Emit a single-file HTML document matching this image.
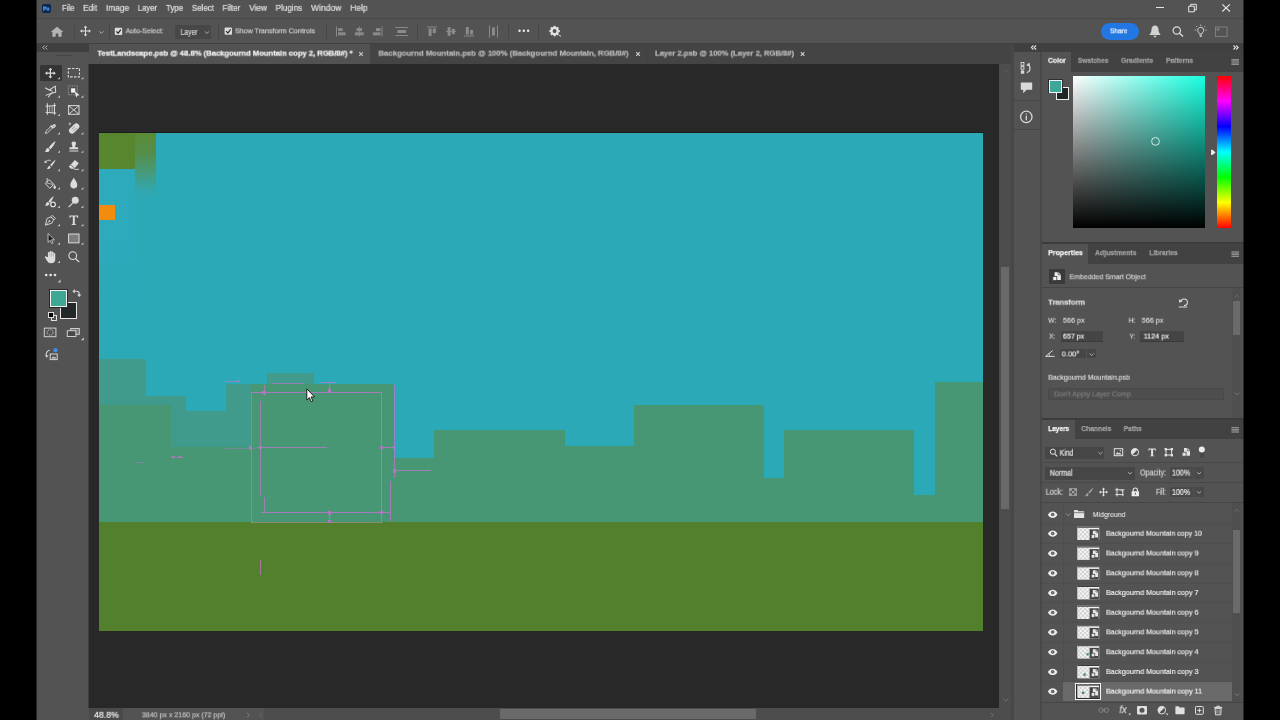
<!DOCTYPE html>
<html>
<head>
<meta charset="utf-8">
<title>Photoshop</title>
<style>
*{box-sizing:border-box;margin:0;padding:0}
html,body{width:1280px;height:720px;overflow:hidden;background:#000}
body{font-family:"Liberation Sans",sans-serif;color:#dcdcdc;position:relative}
.a{position:absolute;display:block}
.t{position:absolute;white-space:nowrap;transform-origin:0 50%;will-change:transform;font-size:8px;line-height:10px;color:#d6d6d6;font-family:"Liberation Sans",sans-serif}
.t{-webkit-text-stroke:0.2px currentColor}
.b{font-weight:bold;-webkit-text-stroke:0.25px currentColor}
svg{overflow:visible}
</style>
</head>
<body>
<div class="a" style="left:36px;top:0;width:1208px;height:720px;background:#535353"></div>
<div class="a" style="left:89.4px;top:44px;width:924.1px;height:20px;background:#444444;"></div>
<div class="a" style="left:89.4px;top:44px;width:280.6px;height:20px;background:#525252;"></div>
<div class="t b" style="left:97px;top:48px;font-size:8px;line-height:10px;transform:translate(0.4px,0.6px) scaleX(0.9545);color:#f4f4f4;">TestLandscape.psb @ 48.8% (Backgournd Mountain copy 2, RGB/8#) *</div>
<svg class="a" style="left:358px;top:51px;" width="8" height="8"><g transform="translate(0.6 0.6)"><path d="M0.600 0.600l3.600 3.600M4.200 0.600l-3.600 3.600" fill="none" stroke="#c8c8c8" stroke-width="1.100"/></g></svg>
<div class="t b" style="left:378px;top:48px;font-size:8px;line-height:10px;transform:translate(0.5px,0.6px) scaleX(0.9655);color:#bababa;">Backgournd Mountain.psb @ 100% (Backgournd Mountain, RGB/8#)</div>
<svg class="a" style="left:635px;top:51px;" width="8" height="8"><g transform="translate(0.6 0.6)"><path d="M0.600 0.600l3.600 3.600M4.200 0.600l-3.600 3.600" fill="none" stroke="#d0d0d0" stroke-width="1.100"/></g></svg>
<div class="a" style="left:646.5px;top:44px;width:1px;height:20px;background:#414141;"></div>
<div class="t b" style="left:655px;top:48px;font-size:8px;line-height:10px;transform:translate(0px,0.6px) scaleX(0.9515);color:#bababa;">Layer 2.psb @ 100% (Layer 2, RGB/8#)</div>
<svg class="a" style="left:800px;top:51px;" width="8" height="8"><g transform="translate(0.2 0.6)"><path d="M0.600 0.600l3.600 3.600M4.200 0.600l-3.600 3.600" fill="none" stroke="#d0d0d0" stroke-width="1.100"/></g></svg>
<div class="a" style="left:88px;top:64px;width:911px;height:644px;background:#282828;"></div>
<div class="a" style="left:99px;top:133px;width:884px;height:498px;background:#2ca9b7;overflow:hidden">
<div class="a" style="left:0px;top:35.6px;width:36px;height:141.4px;background:linear-gradient(to bottom,#2dabbd 0%,#2daabc 40%,rgba(45,170,188,0) 100%);"></div>
<div class="a" style="left:0px;top:0px;width:35.6px;height:35.6px;background:#57862e;"></div>
<div class="a" style="left:35.6px;top:0px;width:21.8px;height:67px;background:linear-gradient(to bottom,#598a35 0%,#558e4a 30%,rgba(76,152,110,0.800) 60%,rgba(60,160,150,0.350) 85%,rgba(44,169,183,0) 100%);"></div>
<div class="a" style="left:0px;top:71.6px;width:16.3px;height:15.2px;background:#f28b0e;"></div>
<div class="a" style="left:0px;top:225.8px;width:47.3px;height:164.2px;background:#419b8d;"></div>
<div class="a" style="left:47.3px;top:263px;width:39.7px;height:127px;background:#419b8d;"></div>
<div class="a" style="left:87px;top:278px;width:40px;height:112px;background:#419b8d;"></div>
<div class="a" style="left:126.7px;top:250.8px;width:41.3px;height:139.2px;background:#419b8d;"></div>
<div class="a" style="left:167.6px;top:239.7px;width:47.6px;height:150.3px;background:#419b8d;"></div>
<div class="a" style="left:0px;top:272px;width:72px;height:118px;background:#479775;"></div>
<div class="a" style="left:72px;top:314.4px;width:80px;height:75.6px;background:#479775;"></div>
<div class="a" style="left:151.5px;top:250.8px;width:143.8px;height:139.2px;background:#479775;"></div>
<div class="a" style="left:295.3px;top:325px;width:39.7px;height:65px;background:#479775;"></div>
<div class="a" style="left:335px;top:296.7px;width:131px;height:93.3px;background:#479775;"></div>
<div class="a" style="left:466px;top:313px;width:69.3px;height:77px;background:#479775;"></div>
<div class="a" style="left:535.3px;top:272.3px;width:130px;height:117.7px;background:#479775;"></div>
<div class="a" style="left:665.3px;top:344.5px;width:20px;height:45.5px;background:#479775;"></div>
<div class="a" style="left:685.3px;top:296.7px;width:130px;height:93.3px;background:#479775;"></div>
<div class="a" style="left:815.3px;top:362px;width:20.7px;height:28px;background:#479775;"></div>
<div class="a" style="left:836px;top:248.7px;width:48px;height:141.3px;background:#479775;"></div>
<div class="a" style="left:0px;top:389.3px;width:884px;height:108.7px;background:#52802d;"></div>
</div>
<div class="a" style="left:99px;top:132.3px;width:884px;height:0.7px;background:#1c1c1c;"></div>
<div class="a" style="left:0;top:0;width:1280px;height:720px;opacity:0.780;filter:blur(0.350px)">
<div class="a" style="left:251px;top:391.7px;width:130.5px;height:1px;background:#c872d2;opacity:1;"></div>
<div class="a" style="left:250.5px;top:392px;width:1px;height:130.6px;background:#c872d2;opacity:0.8;"></div>
<div class="a" style="left:381px;top:392px;width:1px;height:130.6px;background:#c872d2;opacity:1;"></div>
<div class="a" style="left:251px;top:522.1px;width:130.5px;height:1px;background:#d79ad6;opacity:0.55;"></div>
<div class="a" style="left:260.3px;top:400.5px;width:1px;height:95.1px;background:#c872d2;opacity:0.85;"></div>
<div class="a" style="left:263.5px;top:384.5px;width:1px;height:11.5px;background:#c872d2;opacity:0.85;"></div>
<div class="a" style="left:263.5px;top:496.8px;width:1px;height:16px;background:#c872d2;opacity:0.85;"></div>
<div class="a" style="left:261.2px;top:512.3px;width:129.5px;height:1px;background:#c872d2;opacity:1;"></div>
<div class="a" style="left:393.7px;top:384.5px;width:1px;height:93.9px;background:#c872d2;opacity:0.9;"></div>
<div class="a" style="left:389.5px;top:480.7px;width:1px;height:40.1px;background:#c872d2;opacity:0.9;"></div>
<div class="a" style="left:256.7px;top:447px;width:70.5px;height:1px;background:#c872d2;opacity:0.9;"></div>
<div class="a" style="left:225px;top:448.1px;width:31px;height:1px;background:#c872d2;opacity:0.45;"></div>
<div class="a" style="left:248.8px;top:446.2px;width:3.4px;height:3.6px;background:#c872d2;"></div>
<div class="a" style="left:259.4px;top:445.8px;width:3px;height:3.4px;background:#c872d2;"></div>
<div class="a" style="left:381.5px;top:447px;width:12.7px;height:1px;background:#c872d2;opacity:1;"></div>
<div class="a" style="left:380.4px;top:445.6px;width:2.6px;height:3.8px;background:#c872d2;"></div>
<div class="a" style="left:392.6px;top:445.6px;width:2.8px;height:3.8px;background:#c872d2;"></div>
<div class="a" style="left:394.2px;top:470.4px;width:37.1px;height:1px;background:#c872d2;opacity:0.9;"></div>
<div class="a" style="left:393px;top:469px;width:3.2px;height:3.8px;background:#c872d2;"></div>
<div class="a" style="left:329px;top:382.5px;width:1px;height:9.7px;background:#c872d2;opacity:1;"></div>
<div class="a" style="left:320.8px;top:382.1px;width:14.9px;height:1px;background:#c872d2;opacity:1;"></div>
<div class="a" style="left:328px;top:388.8px;width:3px;height:4px;background:#c872d2;"></div>
<div class="a" style="left:272.2px;top:382.5px;width:31.4px;height:1px;background:#c872d2;opacity:0.8;"></div>
<div class="a" style="left:224.6px;top:380.6px;width:15px;height:1px;background:#c872d2;opacity:0.85;"></div>
<div class="a" style="left:236.6px;top:379.8px;width:3.2px;height:2.6px;background:#c872d2;opacity:0.800;"></div>
<div class="a" style="left:262.4px;top:390.6px;width:3.2px;height:3.4px;background:#c872d2;"></div>
<div class="a" style="left:329px;top:512.8px;width:1px;height:9.8px;background:#c872d2;opacity:1;"></div>
<div class="a" style="left:328px;top:511.2px;width:3px;height:3.6px;background:#c872d2;"></div>
<div class="a" style="left:328px;top:519.6px;width:3px;height:3.6px;background:#c872d2;"></div>
<div class="a" style="left:379.8px;top:511.4px;width:3.2px;height:3px;background:#c872d2;"></div>
<div class="a" style="left:170.5px;top:456.5px;width:13.3px;height:1px;background:#c872d2;opacity:0.7;"></div>
<div class="a" style="left:171px;top:455.6px;width:4.4px;height:2.8px;background:#c872d2;opacity:0.700;"></div>
<div class="a" style="left:178px;top:455.6px;width:4.4px;height:2.8px;background:#c872d2;opacity:0.700;"></div>
<div class="a" style="left:136.2px;top:461.5px;width:7.6px;height:1px;background:#c872d2;opacity:0.6;"></div>
<div class="a" style="left:259.7px;top:560px;width:1px;height:15.4px;background:#c872d2;opacity:0.9;"></div>
</div>
<svg class="a" style="left:306px;top:388px;" width="13" height="17"><g transform="translate(0 0)"><path d="M0.800 0.800v11.200l2.600-2.400 1.800 4.100 1.700-0.750-1.800-4h3.500z" fill="#fdfdfd" stroke="#101010" stroke-width="0.900" stroke-linejoin="miter"/></g></svg>
<div class="a" style="left:999px;top:64px;width:12px;height:644px;background:#4d4d4d;"></div>
<div class="a" style="left:1001px;top:266.6px;width:7.8px;height:242.7px;background:#696969;"></div>
<svg class="a" style="left:1002px;top:69px;" width="9" height="7"><g transform="translate(0.8 0.4)"><path d="M0.500 3.200l2.500-2.400 2.500 2.400" fill="none" stroke="#606060" stroke-width="0.900"/></g></svg>
<svg class="a" style="left:1002px;top:698px;" width="9" height="6"><g transform="translate(0.8 0)"><path d="M0.500 0.800l2.500 2.400 2.500-2.400" fill="none" stroke="#7a7a7a" stroke-width="0.900"/></g></svg>
<div class="a" style="left:1011px;top:44px;width:2.8px;height:676px;background:#474747;"></div>
<div class="a" style="left:88.4px;top:708px;width:922.6px;height:12px;background:#4d4d4d;"></div>
<div class="a" style="left:88.4px;top:708px;width:35px;height:12px;background:#494949;"></div>
<div class="a" style="left:123.4px;top:708px;width:140.6px;height:12px;background:#535353;"></div>
<div class="t" style="left:94px;top:709px;font-size:9px;line-height:11px;transform:translate(0px,0.8px) scaleX(0.9718);color:#f0f0f0;">48.8%</div>
<div class="t" style="left:141px;top:710px;font-size:7.8px;line-height:9.8px;transform:translate(0.9px,0.3px) scaleX(0.9019);color:#c4c4c4;">3840 px x 2160 px (72 ppi)</div>
<svg class="a" style="left:246px;top:712px;" width="6" height="8"><g transform="translate(0.5 0.4)"><path d="M0.600 0.600l2.200 2.200-2.200 2.200" fill="none" stroke="#8a8a8a" stroke-width="0.800"/></g></svg>
<svg class="a" style="left:259px;top:712px;" width="6" height="8"><g transform="translate(0 0.4)"><path d="M2.800 0.600l-2.200 2.200 2.200 2.200" fill="none" stroke="#6a6a6a" stroke-width="0.800"/></g></svg>
<div class="a" style="left:499.5px;top:708.8px;width:256px;height:9.8px;background:#6a6a6a;"></div>
<svg class="a" style="left:990px;top:712px;" width="6" height="8"><g transform="translate(0.4 0.4)"><path d="M0.600 0.600l2.200 2.200-2.200 2.200" fill="none" stroke="#767676" stroke-width="0.800"/></g></svg>
<div class="a" style="left:36px;top:43.5px;width:53px;height:676.5px;background:#535353;"></div>
<div class="a" style="left:88px;top:64px;width:1px;height:644px;background:#3d3d3d;"></div>
<div class="a" style="left:36px;top:43px;width:53px;height:9px;background:#404040;"></div>
<svg class="a" style="left:42px;top:45px;" width="8" height="7"><g transform="translate(0 0)"><path d="M2.600 0.500l-2 2 2 2M5.300 0.500l-2 2 2 2" fill="none" stroke="#c8c8c8" stroke-width="0.8"/></g></svg>
<div class="a" style="left:55.5px;top:54.6px;width:15.5px;height:1px;background:#454545;"></div>
<div class="a" style="left:40px;top:65px;width:21.8px;height:15.6px;background:#353535;border-radius:1px;"></div>
<svg class="a" style="left:44px;top:66px;" width="15" height="16"><g transform="translate(0.1 0.9) scale(0.9 0.9)"><path d="M7 2.600v8.800M2.600 7h8.800" fill="none" stroke="#dcdcdc" stroke-width="1.350"/><path d="M7 1l2.100 2.500h-4.200zM7 13l2.100-2.500h-4.200zM1 7l2.500-2.100v4.200zM13 7l-2.500-2.100v4.200z" fill="#dcdcdc"/></g></svg>
<svg class="a" style="left:57px;top:76px;" width="6" height="6"><g transform="translate(0.6 0.9)"><path d="M2.400 0v2.400h-2.400z" fill="#c4c4c4"/></g></svg>
<svg class="a" style="left:67px;top:66px;" width="16" height="16"><g transform="translate(0.5 0.9) scale(0.9 0.9)"><rect x="0.900" y="1.700" width="12.400" height="9.400" fill="none" stroke="#dcdcdc" stroke-width="1.200" stroke-dasharray="2.700 1.500"/></g></svg>
<svg class="a" style="left:81px;top:76px;" width="5" height="6"><g transform="translate(0 0.9)"><path d="M2.400 0v2.400h-2.400z" fill="#c4c4c4"/></g></svg>
<svg class="a" style="left:44px;top:85px;" width="15" height="15"><g transform="translate(0.1 0.27) scale(0.9 0.9)"><path d="M1.100 2.800l4.650 2.500 6.650-4.400 0.500 6.800-5.400 1.500-2.800 4.200" fill="none" stroke="#dcdcdc" stroke-width="1.150" stroke-linejoin="round"/><path d="M9.400 8.400l-7.700 2.800M5.750 5.300l3.900 1.500" fill="none" stroke="#dcdcdc" stroke-width="1"/></g></svg>
<svg class="a" style="left:57px;top:95px;" width="6" height="5"><g transform="translate(0.6 0.27)"><path d="M2.400 0v2.400h-2.400z" fill="#c4c4c4"/></g></svg>
<svg class="a" style="left:67px;top:85px;" width="16" height="15"><g transform="translate(0.5 0.27) scale(0.9 0.9)"><rect x="1" y="0.600" width="10" height="10" fill="none" stroke="#dcdcdc" stroke-width="0.800" stroke-dasharray="1.300 0.700" opacity="0.600"/><rect x="4" y="3.400" width="4.600" height="4.800" fill="#f2f2f2"/><path d="M8 6.600l5.600 4.500-2.500 0.300-1.500 2.300z" fill="#e8e8e8"/></g></svg>
<svg class="a" style="left:81px;top:95px;" width="5" height="5"><g transform="translate(0 0.27)"><path d="M2.400 0v2.400h-2.400z" fill="#c4c4c4"/></g></svg>
<svg class="a" style="left:44px;top:103px;" width="15" height="16"><g transform="translate(0.1 0.64) scale(0.9 0.9)"><path d="M3.600 -0.400v12.800M11.500 -0.400v12.800" fill="none" stroke="#dcdcdc" stroke-width="1.150"/><path d="M1.700 2.900l11.600-0.800M1.700 9.700l11.600 0.800" fill="none" stroke="#dcdcdc" stroke-width="1.100"/><path d="M6.200 2.600v7.500M8.900 2.500v7.700" fill="none" stroke="#dcdcdc" stroke-width="0.800" opacity="0.850"/></g></svg>
<svg class="a" style="left:57px;top:113px;" width="6" height="6"><g transform="translate(0.6 0.64)"><path d="M2.400 0v2.400h-2.400z" fill="#c4c4c4"/></g></svg>
<svg class="a" style="left:67px;top:103px;" width="16" height="16"><g transform="translate(0.5 0.64) scale(0.9 0.9)"><rect x="1.200" y="2.200" width="11.600" height="9.600" fill="none" stroke="#dcdcdc" stroke-width="1.1"/><path d="M1.200 2.200l11.600 9.600M12.800 2.200l-11.600 9.600" fill="none" stroke="#dcdcdc" stroke-width="1"/></g></svg>
<svg class="a" style="left:44px;top:122px;" width="15" height="15"><g transform="translate(0.1 0.01) scale(0.9 0.9)"><path d="M1.400 12.600l0.600-2.200 5.600-5.600 1.700 1.700-5.600 5.600z" fill="none" stroke="#dcdcdc" stroke-width="1"/><path d="M7.200 3.800l3 3M8.600 5.400l2.100-2.100c0.800-0.800 2.200 0.600 1.400 1.400l-2.100 2.100" fill="none" stroke="#dcdcdc" stroke-width="1.500"/></g></svg>
<svg class="a" style="left:57px;top:132px;" width="6" height="5"><g transform="translate(0.6 0.01)"><path d="M2.400 0v2.400h-2.400z" fill="#c4c4c4"/></g></svg>
<svg class="a" style="left:67px;top:122px;" width="16" height="15"><g transform="translate(0.5 0.01) scale(0.9 0.9)"><rect x="-3.300" y="-6.700" width="6.600" height="13.400" rx="3.300" transform="translate(7.400 7.200) rotate(45)" fill="#dcdcdc"/><path d="M4.600 8.400l3.600-3.600M6.400 10.200l3.600-3.600" stroke="#6a6a6a" stroke-width="0.700" fill="none"/><path d="M2.600 0.600v3M1.100 2.100h3" fill="none" stroke="#dcdcdc" stroke-width="0.800"/></g></svg>
<svg class="a" style="left:81px;top:132px;" width="5" height="5"><g transform="translate(0 0.01)"><path d="M2.400 0v2.400h-2.400z" fill="#c4c4c4"/></g></svg>
<svg class="a" style="left:44px;top:140px;" width="15" height="15"><g transform="translate(0.1 0.38) scale(0.9 0.9)"><path d="M12.800 0.800c-2.900 1.700-5.900 4.700-7.600 7.300l2 1.800c2.200-2.100 4.700-5.700 5.600-9.100z" fill="#dcdcdc"/><path d="M4.600 8.600c-1.800 0-2.500 1.300-2.700 2.600-0.100 0.700-0.600 1.100-1.300 1.400 2 0.900 5 0.400 5.700-2z" fill="#dcdcdc"/></g></svg>
<svg class="a" style="left:57px;top:150px;" width="6" height="5"><g transform="translate(0.6 0.38)"><path d="M2.400 0v2.400h-2.400z" fill="#c4c4c4"/></g></svg>
<svg class="a" style="left:67px;top:140px;" width="16" height="15"><g transform="translate(0.5 0.38) scale(0.9 0.9)"><path d="M7 1.200c-1.600 0-2.500 1-2.500 2.200 0 1.100 0.900 1.700 0.900 2.900v1.200h-3.200v2.400h9.600v-2.400h-3.200v-1.200c0-1.200 0.900-1.800 0.900-2.900 0-1.200-0.900-2.200-2.500-2.200z" fill="#dcdcdc"/><path d="M2 11.800h10" fill="none" stroke="#dcdcdc" stroke-width="1.100"/></g></svg>
<svg class="a" style="left:81px;top:150px;" width="5" height="5"><g transform="translate(0 0.38)"><path d="M2.400 0v2.400h-2.400z" fill="#c4c4c4"/></g></svg>
<svg class="a" style="left:44px;top:158px;" width="15" height="16"><g transform="translate(0.1 0.75) scale(0.9 0.9)"><path d="M12.800 1.200c-2.200 1.400-4.700 4-6.100 6.100l1.400 1.200c1.800-1.700 3.800-4.600 4.700-7.300z" fill="#dcdcdc"/><path d="M6.100 8c-1.400 0-1.900 1-2.100 2.100-0.100 0.500-0.500 0.900-1 1 1.500 0.700 3.800 0.400 4.300-1.600z" fill="#dcdcdc"/><path d="M1 4.200c1.200-2.400 4.200-3.400 6.400-2" fill="none" stroke="#dcdcdc" stroke-width="1"/><path d="M0.400 2l0.500 2.900 2.700-0.900z" fill="#dcdcdc"/></g></svg>
<svg class="a" style="left:57px;top:168px;" width="6" height="6"><g transform="translate(0.6 0.75)"><path d="M2.400 0v2.400h-2.400z" fill="#c4c4c4"/></g></svg>
<svg class="a" style="left:67px;top:158px;" width="16" height="16"><g transform="translate(0.5 0.75) scale(0.9 0.9)"><path d="M8.200 1.400l4.400 3.600-5.200 6.200h-3.400l-2.600-2.200z" fill="#dcdcdc"/><path d="M3.600 6.800l4.400 3.700" stroke="#535353" stroke-width="0.900"/><path d="M7.400 11.800h5.400" fill="none" stroke="#dcdcdc" stroke-width="1"/></g></svg>
<svg class="a" style="left:81px;top:168px;" width="5" height="6"><g transform="translate(0 0.75)"><path d="M2.400 0v2.400h-2.400z" fill="#c4c4c4"/></g></svg>
<svg class="a" style="left:44px;top:177px;" width="15" height="15"><g transform="translate(0.1 0.12) scale(0.9 0.9)"><path d="M5.600 2.800l5.200 5.200-4.400 4.400-5.200-5.200z" fill="none" stroke="#dcdcdc" stroke-width="1.1"/><path d="M3.400 1v4.800" fill="none" stroke="#dcdcdc" stroke-width="1"/><path d="M2.400 6.400l7.800 1.800" fill="none" stroke="#dcdcdc" stroke-width="0.800"/><path d="M11.800 8.600c0.800 1.200 1.400 2.100 1.400 2.900 0 0.800-0.600 1.400-1.400 1.400s-1.400-0.600-1.400-1.400c0-0.800 0.600-1.700 1.400-2.900z" fill="#dcdcdc"/></g></svg>
<svg class="a" style="left:57px;top:187px;" width="6" height="5"><g transform="translate(0.6 0.12)"><path d="M2.400 0v2.400h-2.400z" fill="#c4c4c4"/></g></svg>
<svg class="a" style="left:67px;top:177px;" width="16" height="15"><g transform="translate(0.5 0.12) scale(0.9 0.9)"><path d="M7 0.800c1.900 3 3.900 5.500 3.900 7.900 0 2.200-1.700 3.900-3.900 3.900s-3.900-1.700-3.900-3.900c0-2.400 2-4.900 3.900-7.900z" fill="#dcdcdc"/></g></svg>
<svg class="a" style="left:81px;top:187px;" width="5" height="5"><g transform="translate(0 0.12)"><path d="M2.400 0v2.400h-2.400z" fill="#c4c4c4"/></g></svg>
<svg class="a" style="left:44px;top:195px;" width="15" height="16"><g transform="translate(0.1 0.49) scale(0.9 0.9)"><path d="M10.400 0.600c-2 1.500-4.200 4-5.500 6.200l1.700 1.500c1.700-1.800 3.300-4.600 4-7.600z" fill="#dcdcdc"/><path d="M4.500 7.300c-1.600 0-2.300 1.100-2.500 2.400-0.100 0.600-0.500 1-1.200 1.300 1.800 0.800 4.500 0.400 5.100-1.900z" fill="#dcdcdc"/><circle cx="9.900" cy="9.900" r="2.500" fill="#3c3c3c" stroke="#dcdcdc" stroke-width="1.500"/></g></svg>
<svg class="a" style="left:57px;top:205px;" width="6" height="5"><g transform="translate(0.6 0.49)"><path d="M2.400 0v2.400h-2.400z" fill="#c4c4c4"/></g></svg>
<svg class="a" style="left:67px;top:195px;" width="16" height="16"><g transform="translate(0.5 0.49) scale(0.9 0.9)"><circle cx="8.600" cy="5.200" r="3.900" fill="#dcdcdc"/><path d="M5.800 8.400l-4.600 4.600" fill="none" stroke="#dcdcdc" stroke-width="1.300"/></g></svg>
<svg class="a" style="left:81px;top:205px;" width="5" height="5"><g transform="translate(0 0.49)"><path d="M2.400 0v2.400h-2.400z" fill="#c4c4c4"/></g></svg>
<svg class="a" style="left:44px;top:213px;" width="15" height="16"><g transform="translate(0.1 0.86) scale(0.9 0.9)"><path d="M9 1.600l3.600 3.400-1.600 1.600-3.600-3.400z" fill="none" stroke="#dcdcdc" stroke-width="0.900"/><path d="M7.600 3.400l-4.400 1.800-1.800 7.400 7.200-2.200 2-4.200z" fill="none" stroke="#dcdcdc" stroke-width="1"/><path d="M1.600 12.400l3.800-3.800" fill="none" stroke="#dcdcdc" stroke-width="0.800"/><circle cx="5.900" cy="8.100" r="1" fill="#dcdcdc"/></g></svg>
<svg class="a" style="left:57px;top:223px;" width="6" height="6"><g transform="translate(0.6 0.86)"><path d="M2.400 0v2.400h-2.400z" fill="#c4c4c4"/></g></svg>
<svg class="a" style="left:67px;top:213px;" width="16" height="16"><g transform="translate(0.5 0.86) scale(0.9 0.9)"><path d="M2.200 1.800h9.600v2.800h-0.800c-0.100-1.100-0.500-1.700-1.600-1.700h-1.300v7.600c0 0.900 0.400 1.200 1.400 1.300v0.600h-5v-0.600c1-0.100 1.400-0.400 1.400-1.300v-7.600h-1.300c-1.100 0-1.500 0.600-1.600 1.700h-0.800z" fill="#dcdcdc"/></g></svg>
<svg class="a" style="left:81px;top:223px;" width="5" height="6"><g transform="translate(0 0.86)"><path d="M2.400 0v2.400h-2.400z" fill="#c4c4c4"/></g></svg>
<svg class="a" style="left:44px;top:232px;" width="15" height="15"><g transform="translate(0.1 0.23) scale(0.9 0.9)"><path d="M4.400 1.400v9.800l2.400-2.200 1.600 3.500 1.500-0.700-1.600-3.400h3.200z" fill="#1a1a1a" stroke="#dcdcdc" stroke-width="0.900"/></g></svg>
<svg class="a" style="left:57px;top:242px;" width="6" height="5"><g transform="translate(0.6 0.23)"><path d="M2.400 0v2.400h-2.400z" fill="#c4c4c4"/></g></svg>
<svg class="a" style="left:67px;top:232px;" width="16" height="15"><g transform="translate(0.5 0.23) scale(0.9 0.9)"><rect x="1.200" y="2" width="11.600" height="9.800" fill="#7d7d7d" stroke="#dcdcdc" stroke-width="1.1"/></g></svg>
<svg class="a" style="left:81px;top:242px;" width="5" height="5"><g transform="translate(0 0.23)"><path d="M2.400 0v2.400h-2.400z" fill="#c4c4c4"/></g></svg>
<svg class="a" style="left:44px;top:250px;" width="15" height="16"><g transform="translate(0.1 0.6) scale(0.9 0.9)"><path d="M4.200 7.400v-4.800c0-1.300 2-1.300 2 0v-1.300c0-1.300 2.100-1.300 2.100 0v0.700c0-1.300 2.100-1.300 2.100 0v1.600c0-1.200 2-1.200 2 0v6c0 3-1.800 4.400-4.600 4.400-2.300 0-3.500-0.900-4.600-2.800l-2.200-3.600c-0.600-1 0.900-1.800 1.600-0.900z" fill="#dcdcdc"/><path d="M6.200 3v3.600M8.300 2.400v4.200M10.400 3.400v3.200" stroke="#8a8a8a" stroke-width="0.500" fill="none"/></g></svg>
<svg class="a" style="left:57px;top:260px;" width="6" height="6"><g transform="translate(0.6 0.6)"><path d="M2.400 0v2.400h-2.400z" fill="#c4c4c4"/></g></svg>
<svg class="a" style="left:67px;top:250px;" width="16" height="16"><g transform="translate(0.5 0.6) scale(0.9 0.9)"><circle cx="5.800" cy="5.600" r="4.300" fill="none" stroke="#dcdcdc" stroke-width="1.200"/><path d="M8.800 8.800l4.200 4" fill="none" stroke="#dcdcdc" stroke-width="1.500"/></g></svg>
<svg class="a" style="left:44px;top:273px;" width="15" height="6"><g transform="translate(0.6 0.4)"><circle cx="1.600" cy="1.600" r="1.350" fill="#e2e2e2"/><circle cx="6" cy="1.600" r="1.350" fill="#e2e2e2"/><circle cx="10.400" cy="1.600" r="1.350" fill="#e2e2e2"/></g></svg>
<svg class="a" style="left:57px;top:279px;" width="6" height="6"><g transform="translate(0.6 0.4)"><path d="M3 0v3h-3z" fill="#c4c4c4"/></g></svg>
<div class="a" style="left:60.2px;top:301.6px;width:17.2px;height:17.2px;background:#23282a;border:1.3px solid #e8e8e8"></div>
<div class="a" style="left:49px;top:289px;width:19px;height:18.800px;background:#2a2a2a"></div>
<div class="a" style="left:49.8px;top:289.8px;width:17.400px;height:17.200px;background:#3ea795;border:1.300px solid #f2f2f2"></div>
<svg class="a" style="left:72px;top:288px;" width="12" height="12"><g transform="translate(0.4 0.6)"><path d="M2 2.600h2.400c1.600 0 2.400 0.800 2.400 2.400v1.600" fill="none" stroke="#d8d8d8" stroke-width="1.100"/><path d="M0 2.600l2.400-2.200v4.400zM6.800 8.400l-2.200-2.400h4.400z" fill="#d8d8d8"/></g></svg>
<div class="a" style="left:51.400px;top:314.800px;width:5.800px;height:5.800px;border:1px solid #e0e0e0;background:#535353"></div>
<div class="a" style="left:48px;top:311.600px;width:6.400px;height:6.400px;background:#000;border:0.800px solid #dcdcdc"></div>
<svg class="a" style="left:43px;top:327px;" width="16" height="13"><g transform="translate(0.8 0.6)"><rect x="0.500" y="0.500" width="11.600" height="8.600" fill="none" stroke="#d0d0d0" stroke-width="1"/><ellipse cx="6.300" cy="4.800" rx="3.100" ry="2.700" fill="none" stroke="#d0d0d0" stroke-width="0.900" stroke-dasharray="1.300 0.900"/></g></svg>
<svg class="a" style="left:66px;top:328px;" width="16" height="11"><g transform="translate(0.8 0)"><rect x="3.900" y="0.500" width="8.600" height="5.800" fill="#747474" stroke="#d0d0d0" stroke-width="1"/><rect x="0.500" y="2.700" width="8.600" height="5.800" fill="#474747" stroke="#d0d0d0" stroke-width="1"/></g></svg>
<svg class="a" style="left:80px;top:337px;" width="6" height="5"><g transform="translate(0.8 0.2)"><path d="M3 0v3h-3z" fill="#c4c4c4"/></g></svg>
<svg class="a" style="left:45px;top:347px;" width="16" height="16"><g transform="translate(0 0.6)"><path d="M1.400 8.600c-0.800-3 0.600-5.600 3.400-6" fill="none" stroke="#d6d6d6" stroke-width="1.100"/><path d="M0 7.600l1.600 2.600 2-2.400z" fill="#d6d6d6"/><rect x="5.200" y="6.400" width="7" height="5.600" fill="none" stroke="#d6d6d6" stroke-width="1"/><path d="M6.400 10.800l1.600-2 1.200 1.200 0.800-0.800 1.400 1.600z" fill="#d6d6d6"/><circle cx="10.400" cy="2.600" r="2.100" fill="#3f8fe8"/></g></svg>
<div class="a" style="left:1013.5px;top:43.5px;width:230.5px;height:8.5px;background:#404040;"></div>
<svg class="a" style="left:1030px;top:45px;" width="9" height="7"><g transform="translate(0.8 0)"><path d="M2.600 0.500l-2 2 2 2M5.300 0.500l-2 2 2 2" fill="none" stroke="#dedede" stroke-width="1.100"/></g></svg>
<svg class="a" style="left:1232px;top:45px;" width="9" height="7"><g transform="translate(0.8 0)"><path d="M0.700 0.500l2 2-2 2M3.400 0.500l2 2-2 2" fill="none" stroke="#dedede" stroke-width="1.100"/></g></svg>
<div class="a" style="left:1013.5px;top:52px;width:26.5px;height:668px;background:#535353;"></div>
<div class="a" style="left:1039.6px;top:52px;width:2px;height:668px;background:#484848;"></div>
<div class="a" style="left:1013.5px;top:100px;width:26.5px;height:1px;background:#454545;"></div>
<div class="a" style="left:1013.5px;top:129px;width:26.5px;height:1px;background:#454545;"></div>
<svg class="a" style="left:1020px;top:62px;" width="15" height="14"><g transform="translate(0.6 0)"><rect x="0.500" y="0.500" width="2.800" height="2.800" fill="none" stroke="#dadada" stroke-width="0.900"/><rect x="0.500" y="4.400" width="2.800" height="2.800" fill="none" stroke="#dadada" stroke-width="0.900"/><rect x="0.300" y="8.400" width="3.300" height="3.300" fill="#dadada"/><path d="M6.200 10.600c3-0.600 4.600-4.400 2-7.800" fill="none" stroke="#dadada" stroke-width="1.200"/><path d="M5.600 3.200l3.200-2.600 0.600 3.800z" fill="#dadada"/></g></svg>
<svg class="a" style="left:1020px;top:82px;" width="15" height="14"><g transform="translate(0.8 0.4)"><path d="M0.600 0h10.200c0.400 0 0.600 0.200 0.600 0.600v6.200c0 0.400-0.200 0.600-0.600 0.600h-5.000l-3.400 3.400v-3.400h-1.800c-0.400 0-0.600-0.200-0.600-0.600v-6.200c0-0.400 0.200-0.600 0.600-0.600z" fill="#dadada"/></g></svg>
<svg class="a" style="left:1019px;top:110px;" width="16" height="16"><g transform="translate(0.8 0.4)"><circle cx="6.500" cy="6.500" r="5.700" fill="none" stroke="#dadada" stroke-width="1.250"/><path d="M6.500 5.400v4.400" stroke="#dadada" stroke-width="1.300"/><circle cx="6.500" cy="3.700" r="0.700" fill="#dadada"/></g></svg>
<div class="a" style="left:1041.6px;top:52px;width:202.4px;height:189.6px;background:#535353;"></div>
<div class="a" style="left:1041.6px;top:52px;width:202.4px;height:20px;background:#424242;"></div>
<div class="a" style="left:1041.6px;top:52px;width:29.2px;height:20px;background:#535353;"></div>
<div class="t b" style="left:1048px;top:55px;font-size:8px;line-height:10px;transform:translate(0px,0.8px) scaleX(0.8522);color:#f6f6f6;">Color</div>
<div class="t b" style="left:1077px;top:55px;font-size:8px;line-height:10px;transform:translate(0.9px,0.8px) scaleX(0.8264);color:#a2a2a2;">Swatches</div>
<div class="t b" style="left:1121px;top:55px;font-size:8px;line-height:10px;transform:translate(0px,0.8px) scaleX(0.8569);color:#a2a2a2;">Gradients</div>
<div class="t b" style="left:1166px;top:55px;font-size:8px;line-height:10px;transform:translate(0px,0.8px) scaleX(0.8497);color:#a2a2a2;">Patterns</div>
<svg class="a" style="left:1231px;top:59px;" width="11" height="8"><g transform="translate(0.4 0.3)"><path d="M0 0.600h7.600M0 2.700h7.600M0 4.800h7.600" stroke="#a8a8a8" stroke-width="1.100"/></g></svg>
<div class="a" style="left:1055.800px;top:87.200px;width:13.200px;height:13px;background:#202526;border:1.200px solid #f0f0f0"></div>
<div class="a" style="left:1048.200px;top:79px;width:14.400px;height:14.400px;background:#2e2e2e"></div>
<div class="a" style="left:1048.800px;top:79.600px;width:13.200px;height:13.200px;background:#3ea797;border:1.200px solid #f2f2f2"></div>
<div class="a" style="left:1072.800px;top:76.200px;width:132.200px;height:152px;background:linear-gradient(to bottom,rgba(0,0,0,0) 0%,#000 100%),linear-gradient(to right,#fff 0%,#18ffe0 100%)"></div>
<svg class="a" style="left:1150px;top:136px;" width="13" height="13"><g transform="translate(0.5 0.4)"><circle cx="5" cy="5" r="3.900" fill="none" stroke="#d8f4ee" stroke-width="0.900"/></g></svg>
<div class="a" style="left:1217.200px;top:76.200px;width:14.200px;height:152px;background:linear-gradient(to bottom,#ff0000 0%,#ff00ff 16.600%,#0000ff 33.300%,#00ffff 50%,#00ff00 66.600%,#ffff00 83.300%,#ff0000 100%)"></div>
<svg class="a" style="left:1210px;top:149px;" width="8" height="9"><g transform="translate(0.8 0.4)"><path d="M0.300 0.300h1.400l3 2.700-3 2.700h-1.400z" fill="#efefef"/></g></svg>
<div class="a" style="left:1041.6px;top:241.6px;width:202.4px;height:2.4px;background:#3c3c3c;"></div>
<div class="a" style="left:1041.6px;top:244px;width:202.4px;height:174.4px;background:#535353;"></div>
<div class="a" style="left:1041.6px;top:244px;width:202.4px;height:19.8px;background:#424242;"></div>
<div class="a" style="left:1041.6px;top:244px;width:46.4px;height:19.8px;background:#535353;"></div>
<div class="t b" style="left:1048px;top:248px;font-size:8px;line-height:10px;transform:translate(0.2px,0.1px) scaleX(0.8744);color:#f6f6f6;">Properties</div>
<div class="t b" style="left:1095px;top:248px;font-size:8px;line-height:10px;transform:translate(0px,0.1px) scaleX(0.8565);color:#a2a2a2;">Adjustments</div>
<div class="t b" style="left:1149px;top:248px;font-size:8px;line-height:10px;transform:translate(0.4px,0.1px) scaleX(0.8345);color:#a2a2a2;">Libraries</div>
<svg class="a" style="left:1231px;top:251px;" width="11" height="8"><g transform="translate(0.4 0.4)"><path d="M0 0.600h7.600M0 2.700h7.600M0 4.800h7.600" stroke="#a8a8a8" stroke-width="1.100"/></g></svg>
<div class="a" style="left:1049px;top:268.6px;width:15.6px;height:15.4px;background:#3a3a3a;"></div>
<svg class="a" style="left:1052px;top:271px;" width="12" height="13"><g transform="translate(0.6 0.8)"><path d="M2 0.400h3.800l2.400 2.400v5.400h-6.200z" fill="#f0f0f0"/><path d="M5.600 0.400v2.600h2.600" fill="none" stroke="#3a3a3a" stroke-width="0.700"/><rect x="0.200" y="4.800" width="4" height="4" fill="#f0f0f0" stroke="#3a3a3a" stroke-width="0.800"/></g></svg>
<div class="t" style="left:1069px;top:272px;font-size:8px;line-height:10px;transform:translate(0.5px,0.2px) scaleX(0.871);color:#d4d4d4;">Embedded Smart Object</div>
<div class="a" style="left:1041.6px;top:287px;width:202.4px;height:1px;background:#454545;"></div>
<div class="a" style="left:1232px;top:288px;width:9px;height:130.4px;background:#4f4f4f;"></div>
<div class="a" style="left:1233px;top:300.8px;width:7.4px;height:34px;background:#6b6b6b;"></div>
<svg class="a" style="left:1234px;top:294px;" width="8" height="6"><g transform="translate(0 0.4)"><path d="M0.500 3l2.300-2.200 2.300 2.200" fill="none" stroke="#707070" stroke-width="0.900"/></g></svg>
<svg class="a" style="left:1234px;top:392px;" width="8" height="6"><g transform="translate(0.2 0)"><path d="M0.500 0.600l2.300 2.200 2.300-2.200" fill="none" stroke="#7c7c7c" stroke-width="0.900"/></g></svg>
<div class="t b" style="left:1048px;top:297px;font-size:8px;line-height:10px;transform:translate(0.2px,0.6px) scaleX(0.9407);color:#dedede;">Transform</div>
<svg class="a" style="left:1178px;top:297px;" width="12" height="13"><g transform="translate(0 0.8)"><path d="M2.600 3.400c0.800-1.400 2-2.200 3.400-2.200 2 0 3.400 1.500 3.400 3.300s-1.400 3.300-3.400 3.300" fill="none" stroke="#dedede" stroke-width="1.100"/><path d="M0.800 1.400l0.600 3.600 3.200-1.600z" fill="#dedede"/><path d="M0.800 9.200h8.400" stroke="#dedede" stroke-width="1"/></g></svg>
<div class="t" style="left:1048px;top:315px;font-size:8px;line-height:10px;transform:translate(0.2px,0.7px) scaleX(0.8516);color:#d4d4d4;">W:</div>
<div class="t" style="left:1063px;top:315px;font-size:8px;line-height:10px;transform:translate(0px,0.7px) scaleX(0.8993);color:#dcdcdc;">566 px</div>
<div class="t" style="left:1128px;top:315px;font-size:8px;line-height:10px;transform:translate(0.6px,0.7px) scaleX(0.8625);color:#d4d4d4;">H:</div>
<div class="t" style="left:1141px;top:315px;font-size:8px;line-height:10px;transform:translate(0.7px,0.7px) scaleX(0.9034);color:#dcdcdc;">566 px</div>
<div class="t" style="left:1049px;top:331px;font-size:8px;line-height:10px;transform:translate(0px,0.6px) scaleX(0.8732);color:#d4d4d4;">X:</div>
<div class="a" style="left:1060.5px;top:331px;width:42.7px;height:10.8px;background:#454545;border-bottom:1px solid #3a3a3a;"></div>
<div class="t" style="left:1063px;top:331px;font-size:8px;line-height:10px;transform:translate(0px,0.6px) scaleX(0.8826);color:#f2f2f2;">657 px</div>
<div class="t" style="left:1129px;top:331px;font-size:8px;line-height:10px;transform:translate(0.4px,0.6px) scaleX(0.8149);color:#d4d4d4;">Y:</div>
<div class="a" style="left:1140.4px;top:331px;width:43.6px;height:10.8px;background:#454545;border-bottom:1px solid #3a3a3a;"></div>
<div class="t" style="left:1143px;top:331px;font-size:8px;line-height:10px;transform:translate(0.7px,0.6px) scaleX(0.9004);color:#f2f2f2;">1124 px</div>
<svg class="a" style="left:1045px;top:350px;" width="12" height="9"><g transform="translate(0 0)"><path d="M9.600 6.400h-9l7-5.800" fill="none" stroke="#d8d8d8" stroke-width="1"/><path d="M4.600 6.200c0-1.200-0.400-2-1.200-2.800" fill="none" stroke="#d8d8d8" stroke-width="0.800"/></g></svg>
<div class="a" style="left:1060px;top:349px;width:36px;height:9.4px;background:#464646;"></div>
<div class="a" style="left:1086.4px;top:349px;width:1px;height:9.4px;background:#525252;"></div>
<div class="t" style="left:1061px;top:349px;font-size:8px;line-height:10px;transform:translate(0.7px,0.5px) scaleX(0.943);color:#ececec;">0.00°</div>
<svg class="a" style="left:1089px;top:352px;" width="8" height="7"><g transform="translate(0 0.8)"><path d="M0.500 0.700l2.100 2 2.100-2" fill="none" stroke="#b4b4b4" stroke-width="0.900"/></g></svg>
<div class="t" style="left:1048px;top:372px;font-size:8px;line-height:10px;transform:translate(0.2px,0.7px) scaleX(0.88);color:#dcdcdc;">Backgournd Mountain.psb</div>
<div class="a" style="left:1048.2px;top:387.6px;width:175.8px;height:12.8px;background:#4e4e4e;border:1px solid #494949;"></div>
<div class="t" style="left:1054px;top:389px;font-size:8px;line-height:10px;transform:translate(0px,0.4px) scaleX(0.8952);color:#7e7e7e;">Don't Apply Layer Comp</div>
<div class="a" style="left:1041.6px;top:418.4px;width:202.4px;height:2px;background:#3c3c3c;"></div>
<div class="a" style="left:1041.6px;top:420.4px;width:202.4px;height:299.6px;background:#535353;"></div>
<div class="a" style="left:1041.6px;top:420.4px;width:202.4px;height:19px;background:#424242;"></div>
<div class="a" style="left:1041.6px;top:420.4px;width:33.4px;height:19px;background:#535353;"></div>
<div class="t b" style="left:1048px;top:424px;font-size:8px;line-height:10px;transform:translate(0.2px,0px) scaleX(0.814);color:#f6f6f6;">Layers</div>
<div class="t b" style="left:1081px;top:424px;font-size:8px;line-height:10px;transform:translate(0.3px,0px) scaleX(0.8359);color:#a2a2a2;">Channels</div>
<div class="t b" style="left:1123px;top:424px;font-size:8px;line-height:10px;transform:translate(0.7px,0px) scaleX(0.8262);color:#a2a2a2;">Paths</div>
<svg class="a" style="left:1231px;top:427px;" width="11" height="8"><g transform="translate(0.4 0.2)"><path d="M0 0.600h7.600M0 2.700h7.600M0 4.800h7.600" stroke="#a8a8a8" stroke-width="1.100"/></g></svg>
<div class="a" style="left:1045px;top:446.7px;width:59px;height:12.3px;background:#464646;border-radius:1px;"></div>
<svg class="a" style="left:1049px;top:448px;" width="11" height="11"><g transform="translate(0.6 0.4)"><circle cx="3.300" cy="3.300" r="2.600" fill="none" stroke="#e2e2e2" stroke-width="1"/><path d="M5.200 5.400l2.400 2.600" stroke="#e2e2e2" stroke-width="1.200"/></g></svg>
<div class="t" style="left:1059px;top:448px;font-size:8.2px;line-height:10.2px;transform:translate(0.7px,0.7px) scaleX(0.8347);color:#e8e8e8;">Kind</div>
<svg class="a" style="left:1097px;top:451px;" width="8" height="7"><g transform="translate(0.8 0.4)"><path d="M0.500 0.700l2.100 2 2.100-2" fill="none" stroke="#b4b4b4" stroke-width="0.900"/></g></svg>
<svg class="a" style="left:1113px;top:448px;" width="13" height="11"><g transform="translate(0.8 0.2)"><rect x="0.500" y="0.500" width="8.400" height="7" fill="none" stroke="#e2e2e2" stroke-width="1"/><path d="M1.600 6.400l2-2.600 1.400 1.600 1-1 1.800 2z" fill="#e2e2e2"/><circle cx="6.600" cy="2.600" r="0.700" fill="#e2e2e2"/></g></svg>
<svg class="a" style="left:1130px;top:448px;" width="12" height="11"><g transform="translate(0.8 0)"><circle cx="4.200" cy="4.200" r="3.600" fill="none" stroke="#e2e2e2" stroke-width="1"/><path d="M1.600 6.800a3.600 3.600 0 0 1 5.200-5.200z" fill="#e2e2e2"/></g></svg>
<svg class="a" style="left:1148px;top:448px;" width="11" height="11"><g transform="translate(0.2 0.2)"><path d="M0.300 0.300h7.200v2.200h-0.700c-0.100-0.800-0.400-1.200-1.200-1.200h-0.700v5.400c0 0.600 0.300 0.800 1 0.800v0.500h-4v-0.500c0.700 0 1-0.200 1-0.800v-5.400h-0.700c-0.800 0-1.100 0.400-1.200 1.200h-0.700z" fill="#e2e2e2"/></g></svg>
<svg class="a" style="left:1164px;top:448px;" width="12" height="11"><g transform="translate(0.4 0)"><rect x="1.600" y="1.400" width="5.600" height="5.600" fill="none" stroke="#e2e2e2" stroke-width="1"/><rect x="0.200" y="0" width="2.400" height="2.400" fill="#e2e2e2"/><rect x="6.200" y="0" width="2.400" height="2.400" fill="#e2e2e2"/><rect x="0.200" y="6" width="2.400" height="2.400" fill="#e2e2e2"/><rect x="6.200" y="6" width="2.400" height="2.400" fill="#e2e2e2"/></g></svg>
<svg class="a" style="left:1181px;top:447px;" width="12" height="12"><g transform="translate(0.8 0.8)"><path d="M2.200 0.300h3.600l2.400 2.400v5.300h-6z" fill="#e2e2e2"/><path d="M5.600 0.300v2.600h2.600" fill="none" stroke="#535353" stroke-width="0.700"/><rect x="0.300" y="4.400" width="4" height="4" fill="#e2e2e2" stroke="#535353" stroke-width="0.800"/></g></svg>
<div class="a" style="left:1199.8px;top:452px;width:4px;height:6.4px;background:#474747;border-radius:1px;"></div>
<svg class="a" style="left:1198px;top:446px;" width="9" height="9"><g transform="translate(0.6 0.4)"><circle cx="3.200" cy="3.200" r="3" fill="#ececec"/></g></svg>
<div class="a" style="left:1041.6px;top:462px;width:202.4px;height:1px;background:#484848;"></div>
<div class="a" style="left:1045px;top:466.8px;width:89.8px;height:12.8px;background:#464646;border-radius:1px;"></div>
<div class="t" style="left:1049px;top:468px;font-size:8.2px;line-height:10.2px;transform:translate(0.8px,0.8px) scaleX(0.8628);color:#e8e8e8;">Normal</div>
<svg class="a" style="left:1127px;top:471px;" width="8" height="7"><g transform="translate(0.4 0.4)"><path d="M0.500 0.700l2.100 2 2.100-2" fill="none" stroke="#b4b4b4" stroke-width="0.900"/></g></svg>
<div class="t" style="left:1140px;top:468px;font-size:8.2px;line-height:10.2px;transform:translate(0px,0.5px) scaleX(0.8644);color:#d4d4d4;">Opacity:</div>
<div class="a" style="left:1169.6px;top:467.2px;width:34.2px;height:12px;background:#494949;border-radius:1px;"></div>
<div class="t" style="left:1172px;top:468px;font-size:8.2px;line-height:10.2px;transform:translate(0px,0.6px) scaleX(0.8678);color:#ececec;">100%</div>
<div class="a" style="left:1193px;top:467.2px;width:1px;height:12px;background:#535353;"></div>
<svg class="a" style="left:1196px;top:471px;" width="8" height="7"><g transform="translate(0.4 0.4)"><path d="M0.500 0.700l2.100 2 2.100-2" fill="none" stroke="#b4b4b4" stroke-width="0.900"/></g></svg>
<div class="a" style="left:1041.6px;top:482px;width:202.4px;height:1px;background:#484848;"></div>
<div class="t" style="left:1045px;top:487px;font-size:8.2px;line-height:10.2px;transform:translate(0.7px,0.7px) scaleX(0.8827);color:#d4d4d4;">Lock:</div>
<svg class="a" style="left:1069px;top:488px;" width="11" height="10"><g transform="translate(0.2 0.2)"><rect x="0.400" y="0.400" width="7" height="7" fill="none" stroke="#a2a2a2" stroke-width="0.800"/><path d="M0.400 0.400h2.300v2.300h-2.300zM5.100 0.400h2.300v2.300h-2.300zM2.700 2.700h2.400v2.400h-2.400zM0.400 5.100h2.300v2.300h-2.300zM5.100 5.100h2.300v2.300h-2.300z" fill="#a2a2a2"/></g></svg>
<svg class="a" style="left:1084px;top:487px;" width="12" height="12"><g transform="translate(0.2 0.4)"><path d="M9 0.400c-1.800 1-3.800 3.200-5 4.800l1 1c1.600-1.400 3.400-3.600 4-5.800z" fill="#a2a2a2"/><path d="M3.400 5.800c-1 0-1.500 0.800-1.600 1.600-0.100 0.500-0.500 0.900-1.200 1.400 1.400 0.400 3.400 0 3.800-1.800z" fill="#a2a2a2"/></g></svg>
<svg class="a" style="left:1099px;top:487px;" width="11" height="12"><g transform="translate(0 0.6)"><path d="M4.500 1v7M1 4.500h7" fill="none" stroke="#e2e2e2" stroke-width="1"/><path d="M4.500 0l1.600 1.900h-3.200zM4.500 9l1.600-1.900h-3.200zM0 4.500l1.900-1.600v3.200zM9 4.500l-1.900-1.600v3.200z" fill="#e2e2e2"/></g></svg>
<svg class="a" style="left:1115px;top:487px;" width="12" height="12"><g transform="translate(0 0.6)"><path d="M0 2.200h9.400M2 0.200v8.600M0.400 7h8M7.800 2.200v6.400" fill="none" stroke="#e2e2e2" stroke-width="1"/><path d="M5.800 2.400l2 2" stroke="#e2e2e2" stroke-width="0.800"/></g></svg>
<svg class="a" style="left:1131px;top:487px;" width="11" height="12"><g transform="translate(0.4 0.4)"><rect x="0.200" y="3.800" width="7.400" height="5" rx="0.500" fill="#ececec"/><path d="M1.800 4v-1.400c0-1.200 0.900-2 2.100-2s2.100 0.800 2.100 2v1.400" fill="none" stroke="#ececec" stroke-width="1.100"/><rect x="3.400" y="5.400" width="1" height="1.800" fill="#535353"/></g></svg>
<div class="t" style="left:1156px;top:487px;font-size:8.2px;line-height:10.2px;transform:translate(0px,0.7px) scaleX(0.7841);color:#d4d4d4;">Fill:</div>
<div class="a" style="left:1169.6px;top:487px;width:34.2px;height:9.6px;background:#494949;border-radius:1px;"></div>
<div class="t" style="left:1172px;top:488px;font-size:8.2px;line-height:10.2px;transform:translate(0px,0px) scaleX(0.8678);color:#ececec;">100%</div>
<div class="a" style="left:1193px;top:487px;width:1px;height:9.6px;background:#535353;"></div>
<svg class="a" style="left:1196px;top:490px;" width="8" height="7"><g transform="translate(0.4 0.6)"><path d="M0.500 0.700l2.100 2 2.100-2" fill="none" stroke="#b4b4b4" stroke-width="0.900"/></g></svg>
<div class="a" style="left:1041.6px;top:501.6px;width:202.4px;height:1px;background:#454545;"></div>
<div class="a" style="left:1232px;top:502.6px;width:9px;height:199px;background:#4f4f4f;"></div>
<div class="a" style="left:1233px;top:529.6px;width:7.4px;height:83px;background:#6b6b6b;"></div>
<svg class="a" style="left:1234px;top:508px;" width="8" height="7"><g transform="translate(0 0.6)"><path d="M0.500 3l2.300-2.200 2.300 2.200" fill="none" stroke="#707070" stroke-width="0.900"/></g></svg>
<svg class="a" style="left:1234px;top:692px;" width="8" height="7"><g transform="translate(0.2 0.8)"><path d="M0.500 0.600l2.300 2.200 2.300-2.200" fill="none" stroke="#7c7c7c" stroke-width="0.900"/></g></svg>
<div class="a" style="left:1062.6px;top:502.6px;width:0.8px;height:199px;background:#4e4e4e;"></div>
<svg class="a" style="left:1047px;top:511px;" width="13" height="10"><g transform="translate(0.8 0.4)"><path d="M0.100 3.300c1.300-2.100 2.900-3.200 4.800-3.200s3.500 1.100 4.800 3.200c-1.300 2.100-2.900 3.200-4.800 3.200s-3.500-1.100-4.800-3.200z" fill="#ececec"/><circle cx="4.900" cy="3.200" r="1.750" fill="#5a5a5a"/><circle cx="4.900" cy="3.200" r="0.700" fill="#8e8e8e"/></g></svg>
<svg class="a" style="left:1065px;top:512px;" width="8" height="7"><g transform="translate(0.6 0.8)"><path d="M0.500 0.700l2.200 2.200 2.200-2.200" fill="none" stroke="#9a9a9a" stroke-width="0.900"/></g></svg>
<svg class="a" style="left:1074px;top:510px;" width="13" height="10"><g transform="translate(0 0)"><path d="M0 0.600c0-0.300 0.200-0.600 0.600-0.600h2.800l1 1.200h5.200c0.300 0 0.600 0.200 0.600 0.600v5.600c0 0.300-0.200 0.600-0.600 0.600h-9c-0.300 0-0.600-0.200-0.600-0.600z" fill="#e4e4e4"/><path d="M0 2.700h10.200" stroke="#535353" stroke-width="0.700"/></g></svg>
<div class="t" style="left:1092px;top:510px;font-size:8px;line-height:10px;transform:translate(0.8px,0px) scaleX(0.8624);color:#dcdcdc;">Midground</div>
<div class="a" style="left:1041.6px;top:523.8px;width:190.4px;height:0.8px;background:#4e4e4e;"></div>
<div class="a" style="left:1041.6px;top:543.1px;width:190.4px;height:0.8px;background:#4e4e4e;"></div>
<svg class="a" style="left:1047px;top:530px;" width="13" height="9"><g transform="translate(0.8 0.3)"><path d="M0.100 3.300c1.300-2.100 2.900-3.200 4.800-3.200s3.500 1.100 4.800 3.200c-1.300 2.100-2.900 3.200-4.800 3.200s-3.500-1.100-4.800-3.200z" fill="#ececec"/><circle cx="4.900" cy="3.200" r="1.750" fill="#5a5a5a"/><circle cx="4.900" cy="3.200" r="0.700" fill="#8e8e8e"/></g></svg>
<svg class="a" style="left:1077px;top:526px;" width="25" height="17"><g transform="translate(0.4 0.7)"><rect x="0" y="0" width="21.8" height="13.3" fill="#f4f4f4"/><path d="M0 0h2.2v2.2h-2.2zM4.4 0h2.2v2.2h-2.2zM8.8 0h2.2v2.2h-2.2zM2.2 2.2h2.2v2.2h-2.2zM6.6 2.2h2.2v2.2h-2.2zM11 2.2h2.2v2.2h-2.2zM0 4.4h2.2v2.2h-2.2zM4.4 4.4h2.2v2.2h-2.2zM8.8 4.4h2.2v2.2h-2.2zM2.2 6.6h2.2v2.2h-2.2zM6.6 6.6h2.2v2.2h-2.2zM11 6.6h2.2v2.2h-2.2zM0 8.8h2.2v2.2h-2.2zM4.4 8.8h2.2v2.2h-2.2zM8.8 8.8h2.2v2.2h-2.2zM2.2 11h2.2v2.2h-2.2zM6.6 11h2.2v2.2h-2.2zM11 11h2.2v2.2h-2.2z" fill="#d2d2d2"/><rect x="0" y="0" width="21.8" height="1" fill="#3a3a3a"/><rect x="12.200" y="2.600" width="9.200" height="10.700" fill="#444444"/><path d="M15.400 4h3.400l1.800 1.800v5h-5.200z" fill="#e8e8e8"/><path d="M18.600 4v2h2" fill="none" stroke="#444" stroke-width="0.600"/><rect x="13.800" y="8" width="3.600" height="3.600" fill="#e8e8e8" stroke="#444" stroke-width="0.700"/></g></svg>
<div class="t" style="left:1106px;top:528px;font-size:8px;line-height:10px;transform:translate(0px,0.7px) scaleX(0.8883);color:#ececec;">Backgournd Mountain copy 10</div>
<div class="a" style="left:1041.6px;top:562.9px;width:190.4px;height:0.8px;background:#4e4e4e;"></div>
<svg class="a" style="left:1047px;top:550px;" width="13" height="9"><g transform="translate(0.8 0.1)"><path d="M0.100 3.300c1.300-2.100 2.900-3.200 4.800-3.200s3.500 1.100 4.800 3.200c-1.300 2.100-2.900 3.200-4.800 3.200s-3.500-1.100-4.800-3.200z" fill="#ececec"/><circle cx="4.900" cy="3.200" r="1.750" fill="#5a5a5a"/><circle cx="4.900" cy="3.200" r="0.700" fill="#8e8e8e"/></g></svg>
<svg class="a" style="left:1077px;top:546px;" width="25" height="16"><g transform="translate(0.4 0.5)"><rect x="0" y="0" width="21.8" height="13.3" fill="#f4f4f4"/><path d="M0 0h2.2v2.2h-2.2zM4.4 0h2.2v2.2h-2.2zM8.8 0h2.2v2.2h-2.2zM2.2 2.2h2.2v2.2h-2.2zM6.6 2.2h2.2v2.2h-2.2zM11 2.2h2.2v2.2h-2.2zM0 4.4h2.2v2.2h-2.2zM4.4 4.4h2.2v2.2h-2.2zM8.8 4.4h2.2v2.2h-2.2zM2.2 6.6h2.2v2.2h-2.2zM6.6 6.6h2.2v2.2h-2.2zM11 6.6h2.2v2.2h-2.2zM0 8.8h2.2v2.2h-2.2zM4.4 8.8h2.2v2.2h-2.2zM8.8 8.8h2.2v2.2h-2.2zM2.2 11h2.2v2.2h-2.2zM6.6 11h2.2v2.2h-2.2zM11 11h2.2v2.2h-2.2z" fill="#d2d2d2"/><rect x="0" y="0" width="21.8" height="1" fill="#3a3a3a"/><rect x="12.200" y="2.600" width="9.200" height="10.700" fill="#444444"/><path d="M15.400 4h3.400l1.800 1.800v5h-5.200z" fill="#e8e8e8"/><path d="M18.600 4v2h2" fill="none" stroke="#444" stroke-width="0.600"/><rect x="13.800" y="8" width="3.600" height="3.600" fill="#e8e8e8" stroke="#444" stroke-width="0.700"/></g></svg>
<div class="t" style="left:1106px;top:548px;font-size:8px;line-height:10px;transform:translate(0px,0.5px) scaleX(0.8917);color:#ececec;">Backgournd Mountain copy 9</div>
<div class="a" style="left:1041.6px;top:582.7px;width:190.4px;height:0.8px;background:#4e4e4e;"></div>
<svg class="a" style="left:1047px;top:569px;" width="13" height="10"><g transform="translate(0.8 0.9)"><path d="M0.100 3.300c1.300-2.100 2.900-3.200 4.800-3.200s3.500 1.100 4.800 3.200c-1.300 2.100-2.900 3.200-4.800 3.200s-3.500-1.100-4.800-3.200z" fill="#ececec"/><circle cx="4.900" cy="3.200" r="1.750" fill="#5a5a5a"/><circle cx="4.900" cy="3.200" r="0.700" fill="#8e8e8e"/></g></svg>
<svg class="a" style="left:1077px;top:566px;" width="25" height="16"><g transform="translate(0.4 0.3)"><rect x="0" y="0" width="21.8" height="13.3" fill="#f4f4f4"/><path d="M0 0h2.2v2.2h-2.2zM4.4 0h2.2v2.2h-2.2zM8.8 0h2.2v2.2h-2.2zM2.2 2.2h2.2v2.2h-2.2zM6.6 2.2h2.2v2.2h-2.2zM11 2.2h2.2v2.2h-2.2zM0 4.4h2.2v2.2h-2.2zM4.4 4.4h2.2v2.2h-2.2zM8.8 4.4h2.2v2.2h-2.2zM2.2 6.6h2.2v2.2h-2.2zM6.6 6.6h2.2v2.2h-2.2zM11 6.6h2.2v2.2h-2.2zM0 8.8h2.2v2.2h-2.2zM4.4 8.8h2.2v2.2h-2.2zM8.8 8.8h2.2v2.2h-2.2zM2.2 11h2.2v2.2h-2.2zM6.6 11h2.2v2.2h-2.2zM11 11h2.2v2.2h-2.2z" fill="#d2d2d2"/><rect x="0" y="0" width="21.8" height="1" fill="#3a3a3a"/><rect x="12.200" y="2.600" width="9.200" height="10.700" fill="#444444"/><path d="M15.400 4h3.400l1.800 1.800v5h-5.200z" fill="#e8e8e8"/><path d="M18.600 4v2h2" fill="none" stroke="#444" stroke-width="0.600"/><rect x="13.800" y="8" width="3.600" height="3.600" fill="#e8e8e8" stroke="#444" stroke-width="0.700"/></g></svg>
<div class="t" style="left:1106px;top:568px;font-size:8px;line-height:10px;transform:translate(0px,0.3px) scaleX(0.8917);color:#ececec;">Backgournd Mountain copy 8</div>
<div class="a" style="left:1041.6px;top:602.4px;width:190.4px;height:0.8px;background:#4e4e4e;"></div>
<svg class="a" style="left:1047px;top:589px;" width="13" height="10"><g transform="translate(0.8 0.6)"><path d="M0.100 3.300c1.300-2.100 2.900-3.200 4.800-3.200s3.500 1.100 4.800 3.200c-1.300 2.100-2.900 3.200-4.800 3.200s-3.500-1.100-4.800-3.200z" fill="#ececec"/><circle cx="4.900" cy="3.200" r="1.750" fill="#5a5a5a"/><circle cx="4.900" cy="3.200" r="0.700" fill="#8e8e8e"/></g></svg>
<svg class="a" style="left:1077px;top:586px;" width="25" height="16"><g transform="translate(0.4 0)"><rect x="0" y="0" width="21.8" height="13.3" fill="#f4f4f4"/><path d="M0 0h2.2v2.2h-2.2zM4.4 0h2.2v2.2h-2.2zM8.8 0h2.2v2.2h-2.2zM2.2 2.2h2.2v2.2h-2.2zM6.6 2.2h2.2v2.2h-2.2zM11 2.2h2.2v2.2h-2.2zM0 4.4h2.2v2.2h-2.2zM4.4 4.4h2.2v2.2h-2.2zM8.8 4.4h2.2v2.2h-2.2zM2.2 6.6h2.2v2.2h-2.2zM6.6 6.6h2.2v2.2h-2.2zM11 6.6h2.2v2.2h-2.2zM0 8.8h2.2v2.2h-2.2zM4.4 8.8h2.2v2.2h-2.2zM8.8 8.8h2.2v2.2h-2.2zM2.2 11h2.2v2.2h-2.2zM6.6 11h2.2v2.2h-2.2zM11 11h2.2v2.2h-2.2z" fill="#d2d2d2"/><rect x="0" y="0" width="21.8" height="1" fill="#3a3a3a"/><rect x="12.200" y="2.600" width="9.200" height="10.700" fill="#444444"/><path d="M15.400 4h3.400l1.800 1.800v5h-5.200z" fill="#e8e8e8"/><path d="M18.600 4v2h2" fill="none" stroke="#444" stroke-width="0.600"/><rect x="13.800" y="8" width="3.600" height="3.600" fill="#e8e8e8" stroke="#444" stroke-width="0.700"/></g></svg>
<div class="t" style="left:1106px;top:587px;font-size:8px;line-height:10px;transform:translate(0px,1px) scaleX(0.8917);color:#ececec;">Backgournd Mountain copy 7</div>
<div class="a" style="left:1041.6px;top:622.1px;width:190.4px;height:0.8px;background:#4e4e4e;"></div>
<svg class="a" style="left:1047px;top:609px;" width="13" height="9"><g transform="translate(0.8 0.3)"><path d="M0.100 3.300c1.300-2.100 2.900-3.200 4.800-3.200s3.500 1.100 4.800 3.200c-1.300 2.100-2.900 3.200-4.800 3.200s-3.500-1.100-4.800-3.200z" fill="#ececec"/><circle cx="4.900" cy="3.200" r="1.750" fill="#5a5a5a"/><circle cx="4.900" cy="3.200" r="0.700" fill="#8e8e8e"/></g></svg>
<svg class="a" style="left:1077px;top:605px;" width="25" height="17"><g transform="translate(0.4 0.7)"><rect x="0" y="0" width="21.8" height="13.3" fill="#f4f4f4"/><path d="M0 0h2.2v2.2h-2.2zM4.4 0h2.2v2.2h-2.2zM8.8 0h2.2v2.2h-2.2zM2.2 2.2h2.2v2.2h-2.2zM6.6 2.2h2.2v2.2h-2.2zM11 2.2h2.2v2.2h-2.2zM0 4.4h2.2v2.2h-2.2zM4.4 4.4h2.2v2.2h-2.2zM8.8 4.4h2.2v2.2h-2.2zM2.2 6.6h2.2v2.2h-2.2zM6.6 6.6h2.2v2.2h-2.2zM11 6.6h2.2v2.2h-2.2zM0 8.8h2.2v2.2h-2.2zM4.4 8.8h2.2v2.2h-2.2zM8.8 8.8h2.2v2.2h-2.2zM2.2 11h2.2v2.2h-2.2zM6.6 11h2.2v2.2h-2.2zM11 11h2.2v2.2h-2.2z" fill="#d2d2d2"/><rect x="0" y="0" width="21.8" height="1" fill="#3a3a3a"/><rect x="12.200" y="2.600" width="9.200" height="10.700" fill="#444444"/><path d="M15.400 4h3.400l1.800 1.800v5h-5.200z" fill="#e8e8e8"/><path d="M18.600 4v2h2" fill="none" stroke="#444" stroke-width="0.600"/><rect x="13.800" y="8" width="3.600" height="3.600" fill="#e8e8e8" stroke="#444" stroke-width="0.700"/></g></svg>
<div class="t" style="left:1106px;top:607px;font-size:8px;line-height:10px;transform:translate(0px,0.7px) scaleX(0.8917);color:#ececec;">Backgournd Mountain copy 6</div>
<div class="a" style="left:1041.6px;top:641.7px;width:190.4px;height:0.8px;background:#4e4e4e;"></div>
<svg class="a" style="left:1047px;top:628px;" width="13" height="10"><g transform="translate(0.8 0.9)"><path d="M0.100 3.300c1.300-2.100 2.900-3.200 4.800-3.200s3.500 1.100 4.800 3.200c-1.300 2.100-2.900 3.200-4.800 3.200s-3.500-1.100-4.800-3.200z" fill="#ececec"/><circle cx="4.900" cy="3.200" r="1.750" fill="#5a5a5a"/><circle cx="4.900" cy="3.200" r="0.700" fill="#8e8e8e"/></g></svg>
<svg class="a" style="left:1077px;top:625px;" width="25" height="16"><g transform="translate(0.4 0.3)"><rect x="0" y="0" width="21.8" height="13.3" fill="#f4f4f4"/><path d="M0 0h2.2v2.2h-2.2zM4.4 0h2.2v2.2h-2.2zM8.8 0h2.2v2.2h-2.2zM2.2 2.2h2.2v2.2h-2.2zM6.6 2.2h2.2v2.2h-2.2zM11 2.2h2.2v2.2h-2.2zM0 4.4h2.2v2.2h-2.2zM4.4 4.4h2.2v2.2h-2.2zM8.8 4.4h2.2v2.2h-2.2zM2.2 6.6h2.2v2.2h-2.2zM6.6 6.6h2.2v2.2h-2.2zM11 6.6h2.2v2.2h-2.2zM0 8.8h2.2v2.2h-2.2zM4.4 8.8h2.2v2.2h-2.2zM8.8 8.8h2.2v2.2h-2.2zM2.2 11h2.2v2.2h-2.2zM6.6 11h2.2v2.2h-2.2zM11 11h2.2v2.2h-2.2z" fill="#d2d2d2"/><rect x="0" y="0" width="21.8" height="1" fill="#3a3a3a"/><rect x="12.200" y="2.600" width="9.200" height="10.700" fill="#444444"/><path d="M15.400 4h3.400l1.800 1.800v5h-5.200z" fill="#e8e8e8"/><path d="M18.600 4v2h2" fill="none" stroke="#444" stroke-width="0.600"/><rect x="13.800" y="8" width="3.600" height="3.600" fill="#e8e8e8" stroke="#444" stroke-width="0.700"/></g></svg>
<div class="t" style="left:1106px;top:627px;font-size:8px;line-height:10px;transform:translate(0px,0.3px) scaleX(0.8917);color:#ececec;">Backgournd Mountain copy 5</div>
<div class="a" style="left:1041.6px;top:661.6px;width:190.4px;height:0.8px;background:#4e4e4e;"></div>
<svg class="a" style="left:1047px;top:648px;" width="13" height="10"><g transform="translate(0.8 0.8)"><path d="M0.100 3.300c1.300-2.100 2.900-3.200 4.800-3.200s3.500 1.100 4.800 3.200c-1.300 2.100-2.900 3.200-4.800 3.200s-3.500-1.100-4.800-3.200z" fill="#ececec"/><circle cx="4.900" cy="3.200" r="1.750" fill="#5a5a5a"/><circle cx="4.900" cy="3.200" r="0.700" fill="#8e8e8e"/></g></svg>
<svg class="a" style="left:1077px;top:645px;" width="25" height="16"><g transform="translate(0.4 0.2)"><rect x="0" y="0" width="21.8" height="13.3" fill="#f4f4f4"/><path d="M0 0h2.2v2.2h-2.2zM4.4 0h2.2v2.2h-2.2zM8.8 0h2.2v2.2h-2.2zM2.2 2.2h2.2v2.2h-2.2zM6.6 2.2h2.2v2.2h-2.2zM11 2.2h2.2v2.2h-2.2zM0 4.4h2.2v2.2h-2.2zM4.4 4.4h2.2v2.2h-2.2zM8.8 4.4h2.2v2.2h-2.2zM2.2 6.6h2.2v2.2h-2.2zM6.6 6.6h2.2v2.2h-2.2zM11 6.6h2.2v2.2h-2.2zM0 8.8h2.2v2.2h-2.2zM4.4 8.8h2.2v2.2h-2.2zM8.8 8.8h2.2v2.2h-2.2zM2.2 11h2.2v2.2h-2.2zM6.6 11h2.2v2.2h-2.2zM11 11h2.2v2.2h-2.2z" fill="#d2d2d2"/><rect x="0" y="0" width="21.8" height="1" fill="#3a3a3a"/><rect x="9" y="7.8" width="2.400" height="2.400" fill="#5a9483"/><rect x="12.200" y="2.600" width="9.200" height="10.700" fill="#444444"/><path d="M15.400 4h3.400l1.800 1.800v5h-5.200z" fill="#e8e8e8"/><path d="M18.600 4v2h2" fill="none" stroke="#444" stroke-width="0.600"/><rect x="13.800" y="8" width="3.600" height="3.600" fill="#e8e8e8" stroke="#444" stroke-width="0.700"/></g></svg>
<div class="t" style="left:1106px;top:647px;font-size:8px;line-height:10px;transform:translate(0px,0.2px) scaleX(0.8917);color:#ececec;">Backgournd Mountain copy 4</div>
<div class="a" style="left:1041.6px;top:681.4px;width:190.4px;height:0.8px;background:#4e4e4e;"></div>
<svg class="a" style="left:1047px;top:668px;" width="13" height="10"><g transform="translate(0.8 0.6)"><path d="M0.100 3.300c1.300-2.100 2.900-3.200 4.800-3.200s3.500 1.100 4.800 3.200c-1.300 2.100-2.900 3.200-4.800 3.200s-3.500-1.100-4.800-3.200z" fill="#ececec"/><circle cx="4.900" cy="3.200" r="1.750" fill="#5a5a5a"/><circle cx="4.900" cy="3.200" r="0.700" fill="#8e8e8e"/></g></svg>
<svg class="a" style="left:1077px;top:665px;" width="25" height="16"><g transform="translate(0.4 0)"><rect x="0" y="0" width="21.8" height="13.3" fill="#f4f4f4"/><path d="M0 0h2.2v2.2h-2.2zM4.4 0h2.2v2.2h-2.2zM8.8 0h2.2v2.2h-2.2zM2.2 2.2h2.2v2.2h-2.2zM6.6 2.2h2.2v2.2h-2.2zM11 2.2h2.2v2.2h-2.2zM0 4.4h2.2v2.2h-2.2zM4.4 4.4h2.2v2.2h-2.2zM8.8 4.4h2.2v2.2h-2.2zM2.2 6.6h2.2v2.2h-2.2zM6.6 6.6h2.2v2.2h-2.2zM11 6.6h2.2v2.2h-2.2zM0 8.8h2.2v2.2h-2.2zM4.4 8.8h2.2v2.2h-2.2zM8.8 8.8h2.2v2.2h-2.2zM2.2 11h2.2v2.2h-2.2zM6.6 11h2.2v2.2h-2.2zM11 11h2.2v2.2h-2.2z" fill="#d2d2d2"/><rect x="0" y="0" width="21.8" height="1" fill="#3a3a3a"/><rect x="6" y="8.4" width="2.400" height="2.400" fill="#4b8d78"/><rect x="12.200" y="2.600" width="9.200" height="10.700" fill="#444444"/><path d="M15.400 4h3.400l1.800 1.800v5h-5.200z" fill="#e8e8e8"/><path d="M18.600 4v2h2" fill="none" stroke="#444" stroke-width="0.600"/><rect x="13.800" y="8" width="3.600" height="3.600" fill="#e8e8e8" stroke="#444" stroke-width="0.700"/></g></svg>
<div class="t" style="left:1106px;top:666px;font-size:8px;line-height:10px;transform:translate(0px,1px) scaleX(0.8917);color:#ececec;">Backgournd Mountain copy 3</div>
<div class="a" style="left:1063.4px;top:682.2px;width:168.6px;height:19px;background:#696969;"></div>
<svg class="a" style="left:1047px;top:688px;" width="13" height="9"><g transform="translate(0.8 0.2)"><path d="M0.100 3.300c1.300-2.100 2.900-3.200 4.800-3.200s3.500 1.100 4.800 3.200c-1.300 2.100-2.900 3.200-4.800 3.200s-3.500-1.100-4.800-3.200z" fill="#ececec"/><circle cx="4.900" cy="3.200" r="1.750" fill="#5a5a5a"/><circle cx="4.900" cy="3.200" r="0.700" fill="#8e8e8e"/></g></svg>
<div class="a" style="left:1075px;top:683.3px;width:26px;height:16.8px;background:#2a2a2a;border:1px solid #f4f4f4;"></div>
<svg class="a" style="left:1077px;top:684px;" width="25" height="16"><g transform="translate(0.4 0.6)"><rect x="0" y="0" width="21.8" height="13.3" fill="#f4f4f4"/><path d="M0 0h2.2v2.2h-2.2zM4.4 0h2.2v2.2h-2.2zM8.8 0h2.2v2.2h-2.2zM2.2 2.2h2.2v2.2h-2.2zM6.6 2.2h2.2v2.2h-2.2zM11 2.2h2.2v2.2h-2.2zM0 4.4h2.2v2.2h-2.2zM4.4 4.4h2.2v2.2h-2.2zM8.8 4.4h2.2v2.2h-2.2zM2.2 6.6h2.2v2.2h-2.2zM6.6 6.6h2.2v2.2h-2.2zM11 6.6h2.2v2.2h-2.2zM0 8.8h2.2v2.2h-2.2zM4.4 8.8h2.2v2.2h-2.2zM8.8 8.8h2.2v2.2h-2.2zM2.2 11h2.2v2.2h-2.2zM6.6 11h2.2v2.2h-2.2zM11 11h2.2v2.2h-2.2z" fill="#d2d2d2"/><rect x="0" y="0" width="21.8" height="1" fill="#3a3a3a"/><rect x="4.6" y="7" width="2.400" height="2.400" fill="#4b8d78"/><rect x="12.200" y="2.600" width="9.200" height="10.700" fill="#444444"/><path d="M15.400 4h3.400l1.800 1.800v5h-5.200z" fill="#e8e8e8"/><path d="M18.600 4v2h2" fill="none" stroke="#444" stroke-width="0.600"/><rect x="13.800" y="8" width="3.600" height="3.600" fill="#e8e8e8" stroke="#444" stroke-width="0.700"/></g></svg>
<div class="t" style="left:1106px;top:686px;font-size:8px;line-height:10px;transform:translate(0px,0.6px) scaleX(0.8932);color:#f6f6f6;">Backgournd Mountain copy 11</div>
<div class="a" style="left:1041.6px;top:701.6px;width:202.4px;height:0.8px;background:#454545;"></div>
<svg class="a" style="left:1098px;top:707px;" width="14" height="9"><g transform="translate(0.2 0.2)"><rect x="0.500" y="0.800" width="4.600" height="4.400" rx="2.200" fill="none" stroke="#808080" stroke-width="1"/><rect x="5.900" y="0.800" width="4.600" height="4.400" rx="2.200" fill="none" stroke="#808080" stroke-width="1"/><path d="M3.200 3h4.600" stroke="#808080" stroke-width="1"/></g></svg>
<div class="t" style="left:1119px;top:704px;font-size:10px;line-height:12px;font-style:italic;color:#dadada;transform:translate(0.4px,0.2px) scaleX(0.95)">fx</div>
<svg class="a" style="left:1128px;top:713px;" width="6" height="5"><g transform="translate(0.4 0.6)"><path d="M0 0h2.600l-1.300 1.800z" fill="#d0d0d0"/></g></svg>
<svg class="a" style="left:1137px;top:706px;" width="12" height="11"><g transform="translate(0 0)"><rect x="0" y="0" width="10" height="8.400" rx="0.800" fill="#e0e0e0"/><circle cx="5" cy="4.200" r="2.500" fill="#535353"/></g></svg>
<svg class="a" style="left:1157px;top:705px;" width="12" height="12"><g transform="translate(0.4 0.8)"><circle cx="4.400" cy="4.400" r="3.800" fill="none" stroke="#e0e0e0" stroke-width="1"/><path d="M1.700 7.100a3.800 3.800 0 0 1 5.400-5.400z" fill="#e0e0e0"/></g></svg>
<svg class="a" style="left:1165px;top:713px;" width="6" height="5"><g transform="translate(0.8 0.6)"><path d="M0 0h2.600l-1.300 1.800z" fill="#d0d0d0"/></g></svg>
<svg class="a" style="left:1175px;top:706px;" width="12" height="11"><g transform="translate(0.4 0.2)"><path d="M0 0.600c0-0.300 0.200-0.600 0.600-0.600h2.600l0.900 1.200h4.500c0.300 0 0.600 0.200 0.600 0.600v5.600c0 0.300-0.200 0.600-0.600 0.600h-8c-0.300 0-0.600-0.200-0.600-0.600z" fill="#e0e0e0"/></g></svg>
<svg class="a" style="left:1195px;top:706px;" width="11" height="11"><g transform="translate(0 0)"><rect x="0.500" y="0.500" width="7.800" height="7.800" rx="0.800" fill="none" stroke="#e0e0e0" stroke-width="1"/><path d="M4.400 2.400v4M2.400 4.400h4" stroke="#e0e0e0" stroke-width="1"/></g></svg>
<svg class="a" style="left:1214px;top:705px;" width="11" height="13"><g transform="translate(0 0.6)"><path d="M0 1.800h8.200M2.800 1.800v-1.200h2.600v1.200" fill="none" stroke="#e0e0e0" stroke-width="1"/><path d="M1 2.800h6.200l-0.500 6.400h-5.200z" fill="none" stroke="#e0e0e0" stroke-width="1"/><path d="M3 4v4M5.200 4v4" stroke="#e0e0e0" stroke-width="0.700"/></g></svg>
<div class="a" style="left:36px;top:0px;width:1208px;height:18px;background:#535353;"></div>
<div class="a" style="left:36px;top:18px;width:1208px;height:1px;background:#484848;"></div>
<div class="a" style="left:41.5px;top:3.5px;width:9.5px;height:9px;background:#0b2550;border-radius:2px"></div>
<div class="t b" style="left:43px;top:4px;font-size:6px;line-height:8px;transform:translate(0px,0.5px) scaleX(0.8993);color:#5fa8f5;">Ps</div>
<div class="t" style="left:62px;top:2px;font-size:9.3px;line-height:11.3px;transform:translate(0px,0.85px) scaleX(0.8274);color:#e2e2e2;">File</div>
<div class="t" style="left:83px;top:2px;font-size:9.3px;line-height:11.3px;transform:translate(0.1px,0.85px) scaleX(0.8798);color:#e2e2e2;">Edit</div>
<div class="t" style="left:106px;top:2px;font-size:9.3px;line-height:11.3px;transform:translate(0px,0.85px) scaleX(0.8937);color:#e2e2e2;">Image</div>
<div class="t" style="left:137px;top:2px;font-size:9.3px;line-height:11.3px;transform:translate(0.8px,0.85px) scaleX(0.821);color:#e2e2e2;">Layer</div>
<div class="t" style="left:166px;top:2px;font-size:9.3px;line-height:11.3px;transform:translate(0px,0.85px) scaleX(0.8481);color:#e2e2e2;">Type</div>
<div class="t" style="left:191px;top:2px;font-size:9.3px;line-height:11.3px;transform:translate(0.8px,0.85px) scaleX(0.8589);color:#e2e2e2;">Select</div>
<div class="t" style="left:222px;top:2px;font-size:9.3px;line-height:11.3px;transform:translate(0.5px,0.85px) scaleX(0.8564);color:#e2e2e2;">Filter</div>
<div class="t" style="left:249px;top:2px;font-size:9.3px;line-height:11.3px;transform:translate(0.2px,0.85px) scaleX(0.8904);color:#e2e2e2;">View</div>
<div class="t" style="left:275px;top:2px;font-size:9.3px;line-height:11.3px;transform:translate(0.6px,0.85px) scaleX(0.872);color:#e2e2e2;">Plugins</div>
<div class="t" style="left:311px;top:2px;font-size:9.3px;line-height:11.3px;transform:translate(0px,0.85px) scaleX(0.9191);color:#e2e2e2;">Window</div>
<div class="t" style="left:350px;top:2px;font-size:9.3px;line-height:11.3px;transform:translate(0.3px,0.85px) scaleX(0.8992);color:#e2e2e2;">Help</div>
<div class="a" style="left:1155.8px;top:7.3px;width:8.5px;height:1px;background:#e6e6e6;"></div>
<svg class="a" style="left:1187px;top:3px;" width="13" height="12"><g transform="translate(0.5 0)"><path d="M1.2 3.2h5.6v5.6h-5.6z M3.2 3.2v-1.9h5.6v5.6h-1.9" fill="none" stroke="#e6e6e6" stroke-width="1"/></g></svg>
<svg class="a" style="left:1221px;top:3px;" width="12" height="12"><g transform="translate(0 0)"><path d="M1.3 1.3l7.6 7.2M8.9 1.3l-7.6 7.2" fill="none" stroke="#e6e6e6" stroke-width="1.1"/></g></svg>
<div class="a" style="left:36px;top:19px;width:1208px;height:23.6px;background:#535353;"></div>
<div class="a" style="left:36px;top:42.6px;width:1208px;height:1.4px;background:#404040;"></div>
<svg class="a" style="left:50px;top:26px;" width="16" height="13"><g transform="translate(0.5 0.5)"><path d="M6.5 0.3L0.2 5.6h1.7v4.7h3.3v-3.4h2.6v3.4h3.3v-4.7h1.7z" fill="#b4b4b4"/></g></svg>
<div class="a" style="left:74px;top:24px;width:1px;height:15px;background:#4a4a4a;"></div>
<svg class="a" style="left:80px;top:25px;" width="13" height="14"><g transform="translate(0 0.5)"><g fill="none" stroke="#dedede" stroke-width="1"><path d="M5.5 1v9M1 5.5h9"/></g><path d="M5.5 0l1.8 2.2h-3.6zM5.5 11l1.8-2.2h-3.6zM0 5.5l2.2-1.8v3.6zM11 5.5l-2.2-1.8v3.6z" fill="#dedede"/></g></svg>
<svg class="a" style="left:98px;top:30px;" width="8" height="7"><g transform="translate(0.8 0.5)"><path d="M0.5 0.8l2 2 2-2" fill="none" stroke="#b8b8b8" stroke-width="0.9"/></g></svg>
<div class="a" style="left:108.6px;top:24px;width:1px;height:15px;background:#464646;"></div>
<svg class="a" style="left:114px;top:27px;" width="11" height="10"><g transform="translate(0.8 0.8)"><rect x="0" y="0" width="7.4" height="7.2" rx="1" fill="#dcdcdc"/><path d="M1.6 3.6l1.7 1.8 2.7-3.6" fill="none" stroke="#2c2c2c" stroke-width="1.2"/></g></svg>
<div class="t" style="left:125px;top:26px;font-size:8px;line-height:10px;transform:translate(0.6px,0.3px) scaleX(0.8697);color:#d2d2d2;">Auto-Select:</div>
<div class="a" style="left:175px;top:25px;width:35.5px;height:13.5px;background:#474747;border-radius:1.5px;"></div>
<div class="t" style="left:180px;top:26px;font-size:8.3px;line-height:10.3px;transform:translate(0.6px,0.95px) scaleX(0.8091);color:#d2d2d2;">Layer</div>
<svg class="a" style="left:204px;top:30px;" width="8" height="7"><g transform="translate(0.3 0.6)"><path d="M0.5 0.8l2.2 2 2.2-2" fill="none" stroke="#b0b0b0" stroke-width="0.9"/></g></svg>
<div class="a" style="left:217.8px;top:24px;width:1px;height:15px;background:#464646;"></div>
<svg class="a" style="left:224px;top:27px;" width="10" height="10"><g transform="translate(0.6 0.6)"><rect x="0" y="0" width="7.4" height="7.2" rx="1" fill="#dcdcdc"/><path d="M1.6 3.6l1.7 1.8 2.7-3.6" fill="none" stroke="#2c2c2c" stroke-width="1.2"/></g></svg>
<div class="t" style="left:235px;top:26px;font-size:8px;line-height:10px;transform:translate(0px,0.3px) scaleX(0.8864);color:#d2d2d2;">Show Transform Controls</div>
<div class="a" style="left:326px;top:24px;width:1px;height:15px;background:#464646;"></div>
<svg class="a" style="left:336px;top:26px;" width="12" height="13"><g transform="translate(0 0.5)"><path d="M0.5 0v10" stroke="#8a8a8a" stroke-width="1"/><rect x="2" y="1.6" width="4.6" height="3" fill="#8a8a8a"/><rect x="2" y="5.8" width="7.6" height="3" fill="#8a8a8a"/></g></svg>
<svg class="a" style="left:354px;top:26px;" width="13" height="13"><g transform="translate(0.3 0.5)"><path d="M5 0v10" stroke="#8a8a8a" stroke-width="1"/><rect x="2.3" y="1.6" width="5.4" height="3" fill="#8a8a8a"/><rect x="0.6" y="5.8" width="8.8" height="3" fill="#8a8a8a"/></g></svg>
<svg class="a" style="left:372px;top:26px;" width="13" height="13"><g transform="translate(0.5 0.5)"><path d="M9.5 0v10" stroke="#8a8a8a" stroke-width="1"/><rect x="3.4" y="1.6" width="4.6" height="3" fill="#8a8a8a"/><rect x="0.4" y="5.8" width="7.6" height="3" fill="#8a8a8a"/></g></svg>
<svg class="a" style="left:395px;top:27px;" width="15" height="11"><g transform="translate(0.4 0)"><path d="M0 0.5h12.6M0 8.5h12.6" stroke="#8a8a8a" stroke-width="1"/><rect x="2" y="3" width="8.6" height="3" fill="#8a8a8a"/></g></svg>
<div class="a" style="left:416.6px;top:24px;width:1px;height:15px;background:#464646;"></div>
<svg class="a" style="left:427px;top:26px;" width="12" height="13"><g transform="translate(0 0.5)"><path d="M0 0.5h10" stroke="#8a8a8a" stroke-width="1"/><rect x="1.6" y="2" width="3" height="7.6" fill="#8a8a8a"/><rect x="5.8" y="2" width="3" height="4.6" fill="#8a8a8a"/></g></svg>
<svg class="a" style="left:446px;top:26px;" width="12" height="13"><g transform="translate(0 0.5)"><path d="M0 5h10" stroke="#8a8a8a" stroke-width="1"/><rect x="1.6" y="0.6" width="3" height="8.8" fill="#8a8a8a"/><rect x="5.8" y="2.3" width="3" height="5.4" fill="#8a8a8a"/></g></svg>
<svg class="a" style="left:464px;top:26px;" width="13" height="13"><g transform="translate(0.2 0.5)"><path d="M0 9.5h10" stroke="#8a8a8a" stroke-width="1"/><rect x="1.6" y="0.4" width="3" height="7.6" fill="#8a8a8a"/><rect x="5.8" y="3.4" width="3" height="4.6" fill="#8a8a8a"/></g></svg>
<svg class="a" style="left:489px;top:25px;" width="11" height="15"><g transform="translate(0 0.5)"><path d="M0.5 0v12M8.5 0v12" stroke="#8a8a8a" stroke-width="1"/><rect x="3" y="2" width="3" height="8" fill="#8a8a8a"/></g></svg>
<div class="a" style="left:508.2px;top:24px;width:1px;height:15px;background:#464646;"></div>
<svg class="a" style="left:518px;top:29px;" width="14" height="6"><g transform="translate(0 0.3)"><circle cx="1.5" cy="1.5" r="1.25" fill="#e8e8e8"/><circle cx="5.8" cy="1.5" r="1.25" fill="#e8e8e8"/><circle cx="10.1" cy="1.5" r="1.25" fill="#e8e8e8"/></g></svg>
<div class="a" style="left:538px;top:24px;width:1px;height:15px;background:#464646;"></div>
<svg class="a" style="left:549px;top:25px;" width="14" height="15"><g transform="translate(0.2 0.7)"><g transform="translate(5.4 5.4)"><rect x="-1.1" y="-5.2" width="2.2" height="3" fill="#e4e4e4" transform="rotate(0)"/><rect x="-1.1" y="-5.2" width="2.2" height="3" fill="#e4e4e4" transform="rotate(45)"/><rect x="-1.1" y="-5.2" width="2.2" height="3" fill="#e4e4e4" transform="rotate(90)"/><rect x="-1.1" y="-5.2" width="2.2" height="3" fill="#e4e4e4" transform="rotate(135)"/><rect x="-1.1" y="-5.2" width="2.2" height="3" fill="#e4e4e4" transform="rotate(180)"/><rect x="-1.1" y="-5.2" width="2.2" height="3" fill="#e4e4e4" transform="rotate(225)"/><rect x="-1.1" y="-5.2" width="2.2" height="3" fill="#e4e4e4" transform="rotate(270)"/><rect x="-1.1" y="-5.2" width="2.2" height="3" fill="#e4e4e4" transform="rotate(315)"/><circle r="3.1" fill="none" stroke="#e4e4e4" stroke-width="1.9"/></g><path d="M9.4 9.4h2v2z" fill="#e4e4e4"/></g></svg>
<div class="a" style="left:1100.8px;top:23px;width:38.2px;height:16.8px;background:#2277e3;border-radius:8.4px"></div>
<div class="t" style="left:1110px;top:26px;font-size:8px;line-height:10px;transform:translate(0px,0.3px) scaleX(0.815);color:#ffffff;">Share</div>
<svg class="a" style="left:1149px;top:25px;" width="14" height="15"><g transform="translate(0.5 0)"><path d="M5.500 0.400c-2.300 0-3.500 1.800-3.500 4 0 2.700-0.900 3.700-1.800 4.600v1h10.600v-1c-0.900-0.900-1.800-1.900-1.800-4.600 0-2.200-1.200-4-3.500-4z" fill="#d2d2d2"/><path d="M3.900 10.800c0.200 0.900 0.800 1.500 1.600 1.500s1.400-0.600 1.600-1.500z" fill="#d2d2d2"/></g></svg>
<svg class="a" style="left:1172px;top:26px;" width="14" height="13"><g transform="translate(0.3 0)"><circle cx="4.5" cy="4.5" r="3.7" fill="none" stroke="#dadada" stroke-width="1.2"/><path d="M7.200 7.300l3.600 3.300" stroke="#dadada" stroke-width="1.3"/></g></svg>
<svg class="a" style="left:1194px;top:24px;" width="15" height="16"><g transform="translate(0.5 0.5)"><path d="M6.2 2.800c-1.800 0-3 1.300-3 2.900 0 1.100 0.600 1.800 1.200 2.500 0.300 0.400 0.500 0.800 0.500 1.300h2.600c0-0.500 0.200-0.900 0.500-1.300 0.600-0.700 1.200-1.400 1.200-2.500 0-1.600-1.200-2.900-3-2.900z" fill="none" stroke="#dadada" stroke-width="1"/><path d="M5 10.800h2.400M5.300 12h1.800" stroke="#dadada" stroke-width="0.9"/><path d="M6.200 0v1.400M1.700 1.600l0.900 0.900M10.700 1.600l-0.900 0.900M0.200 5.600h1.300M12.200 5.600h-1.300" stroke="#dadada" stroke-width="0.8"/></g></svg>
<svg class="a" style="left:1215px;top:26px;" width="15" height="13"><g transform="translate(0 0.5)"><rect x="0.5" y="0.5" width="11.6" height="9.400" fill="none" stroke="#808080" stroke-width="1"/><rect x="1.600" y="1.800" width="2.800" height="2.200" fill="#808080"/></g></svg>
<div class="a" style="left:0;top:0;width:36px;height:720px;background:#000"></div><div class="a" style="left:36px;top:0;width:1px;height:720px;background:rgba(0,0,0,0.55)"></div><div class="a" style="left:1244px;top:0;width:36px;height:720px;background:#000"></div><div class="a" style="left:1243px;top:0;width:1px;height:720px;background:rgba(0,0,0,0.5)"></div>
</body>
</html>
